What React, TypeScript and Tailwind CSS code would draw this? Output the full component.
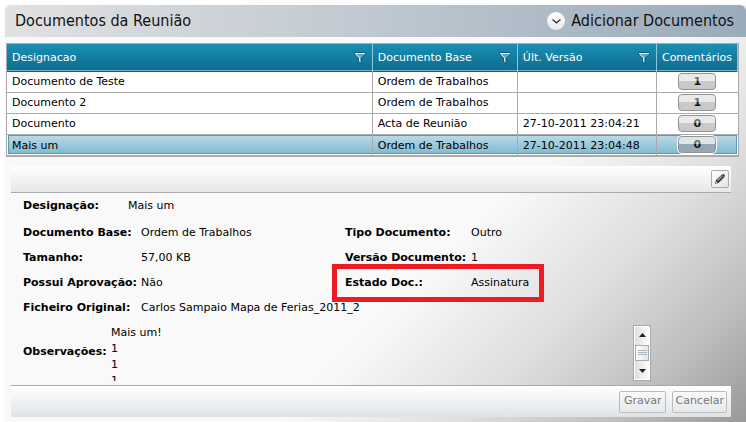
import React, { useState } from 'react'

const documents = [
  { name: 'Documento de Teste', base: 'Ordem de Trabalhos', version: '', comments: 1 },
  { name: 'Documento 2', base: 'Ordem de Trabalhos', version: '', comments: 1 },
  { name: 'Documento', base: 'Acta de Reunião', version: '27-10-2011 23:04:21', comments: 0 },
  { name: 'Mais um', base: 'Ordem de Trabalhos', version: '27-10-2011 23:04:48', comments: 0 },
]

const columns = [
  { title: 'Designacao', filter: true },
  { title: 'Documento Base', filter: true },
  { title: 'Últ. Versão', filter: true },
  { title: 'Comentários', filter: false },
]

function FilterIcon() {
  return (
    <svg width="12" height="13" viewBox="0 0 12 13" aria-hidden="true">
      <path d="M0.5 0.5H11.5V2L7.5 6V12.5L4.5 9.5V6L0.5 2Z" fill="#5fa9c2" stroke="#0b4e68" strokeOpacity="0.8" />
      <path d="M1 1.5H11" stroke="#fff" />
      <path d="M2 2.5L5.5 5.5V9.5" fill="none" stroke="#e3f3f8" />
    </svg>
  )
}

function PencilIcon() {
  return (
    <svg width="12" height="12" viewBox="0 0 12 12" aria-hidden="true">
      <path d="M1 11L2 7L8 1.5L9.5 1L11 2.5L10.5 4L4.5 10Z" fill="#3a3a3a" />
      <path d="M3.5 7.5L8 3.3" stroke="#aaa" strokeWidth="1.2" />
      <path d="M2 9.2L3 10" stroke="#eee" strokeWidth="1.2" />
      <path d="M8 2L10 4" stroke="#888" strokeWidth="0.8" />
    </svg>
  )
}

function CommentButton({ count, selected }: { count: number; selected: boolean }) {
  return (
    <button
      className={`relative block h-[17px] w-[38px] mx-auto overflow-hidden rounded border border-[#949494] text-[11px] leading-[15px] font-bold text-[#111] ${
        selected
          ? 'bg-linear-to-b from-[#c6d5da] from-50% to-[#93aab4] to-50% outline outline-white'
          : 'bg-linear-to-b from-[#dcdcdc] from-50% to-[#c9c9c9] to-50%'
      }`}
    >
      {count}
      <span className="absolute inset-x-0 top-0 h-[7px] bg-white/40" />
    </button>
  )
}

function Field({ label, value, className = '' }: { label: string; value: string; className?: string }) {
  return (
    <>
      <dt className="whitespace-nowrap font-bold">{label}</dt>
      <dd className={`whitespace-nowrap ${className}`}>{value}</dd>
    </>
  )
}

function Scrollbar() {
  return (
    <div className="flex h-14 w-[18px] flex-col items-center justify-between border border-[#aaa] bg-linear-to-r from-[#dcdddf] to-white outline-1 -outline-offset-2 outline-white">
      <button aria-label="Subir" className="flex h-[18px] w-full items-center justify-center">
        <svg width="7" height="4" viewBox="0 0 7 4"><path d="M0 4L3.5 0L7 4Z" fill="#222" /></svg>
      </button>
      <div className="flex h-4 w-[14px] flex-col items-center justify-center gap-px border border-[#aaa] bg-linear-to-r from-white to-[#e2e6e9]">
        <span className="h-px w-[9px] bg-[#a9b5bf]" />
        <span className="h-px w-[9px] bg-[#a9b5bf]" />
        <span className="h-px w-[9px] bg-[#a9b5bf]" />
      </div>
      <button aria-label="Descer" className="flex h-[18px] w-full items-center justify-center">
        <svg width="7" height="4" viewBox="0 0 7 4"><path d="M0 0L3.5 4L7 0Z" fill="#222" /></svg>
      </button>
    </div>
  )
}

function App() {
  const [selected, setSelected] = useState(3)

  return (
    <div className="min-h-screen overflow-hidden bg-[linear-gradient(135deg,#f9f9f9_0%,#f9f9f9_60%,#dedede_76%,#bebebe_89%,#999_100%)] pt-[5px] pl-[5px] font-['DejaVu_Sans',sans-serif] text-[11px] text-black shadow-[inset_5px_5px_4px_#fff]">
      <header className="flex h-8 items-center justify-between rounded-t-md bg-linear-to-r from-[#e1e1e1] via-[#bfc8d1] to-[#9aabba] pr-3 pl-2.5 font-['DejaVu_Sans_Condensed','DejaVu_Sans',sans-serif] text-base text-[#111]">
        <h1>Documentos da Reunião</h1>
        <button className="flex items-center gap-1.5">
          <span className="flex size-[18px] items-center justify-center rounded-full bg-linear-to-b from-white to-[#e9e9e9]">
            <svg width="9" height="5" viewBox="0 0 9 5"><path d="M0.5 0.5L4.5 3.8L8.5 0.5" fill="none" stroke="#333" strokeWidth="1.3" /></svg>
          </span>
          Adicionar Documentos
        </button>
      </header>

      <div className="mt-1.5 mr-[7px] ml-px border border-b-2 border-[#aaa] bg-white">
        <table className="w-full table-fixed border-collapse text-left">
          <colgroup>
            <col className="w-1/2" />
            <col className="w-[145px]" />
            <col className="w-[139px]" />
            <col className="w-[81px]" />
          </colgroup>
          <thead>
            <tr className="h-[27px] border-b border-[#0d6480] bg-linear-to-b from-[#1a8fb4] to-[#0e6d8f] text-white">
              {columns.map((column) => (
                <th key={column.title} className="border-r border-[#8ec6da] pt-0.5 pl-[5px] font-normal shadow-[inset_0_-1px_0_#6fb3cb]">
                  <div className="flex items-center justify-between">
                    {column.title}
                    {column.filter && (
                      <button aria-label={`Filtrar ${column.title}`} className="pr-1.5">
                        <FilterIcon />
                      </button>
                    )}
                  </div>
                </th>
              ))}
            </tr>
          </thead>
          <tbody>
            {documents.map((doc, index) => (
              <tr
                key={doc.name}
                onClick={() => setSelected(index)}
                className={`h-[21px] border-t border-[#aaa] ${
                  selected === index
                    ? 'bg-linear-to-b from-[#bcdbe6] to-[#7ab8d0] shadow-[inset_0_0_0_1px_#fff,inset_0_0_0_2px_#5b9ab3]'
                    : ''
                }`}
              >
                <td className="border-r border-[#aaa] pt-0.5 pl-[5px]">{doc.name}</td>
                <td className="border-r border-[#aaa] pt-0.5 pl-[5px]">{doc.base}</td>
                <td className="border-r border-[#aaa] pt-0.5 pl-[5px]">{doc.version}</td>
                <td>
                  <CommentButton count={doc.comments} selected={selected === index} />
                </td>
              </tr>
            ))}
          </tbody>
        </table>
      </div>

      <section className="mt-[9px] mr-[15px] ml-1.5">
        <div className="flex h-[27px] items-center justify-end border-b border-[#aaa] bg-linear-to-b from-white to-[#e7e7e7] pr-0.5">
          <button aria-label="Editar" className="flex size-[18px] items-center justify-center rounded-xs border border-[#aaa] bg-linear-to-br from-white to-[#e0e5e9]">
            <PencilIcon />
          </button>
        </div>

        <div className="px-3">
          <dl className="flex h-[27px] items-center">
            <Field label="Designação:" value="Mais um" className="ml-[29px]" />
          </dl>
          <div className="flex items-start leading-[25px]">
            <dl className="grid w-[322px] grid-cols-[118px_1fr]">
              <Field label="Documento Base:" value="Ordem de Trabalhos" />
              <Field label="Tamanho:" value="57,00 KB" />
              <Field label="Possui Aprovação:" value="Não" />
              <Field label="Ficheiro Original:" value="Carlos Sampaio Mapa de Ferias_2011_2" />
            </dl>
            <div className="relative w-[212px]">
              <dl className="grid grid-cols-[126px_1fr]">
                <Field label="Tipo Documento:" value="Outro" />
                <Field label="Versão Documento:" value="1" />
                <Field label="Estado Doc.:" value="Assinatura" />
              </dl>
              <div className="pointer-events-none absolute -bottom-[7px] -left-[13px] h-[38px] w-full border-5 border-[#ed1c24]" />
            </div>
          </div>
          <div className="flex h-[65px] items-center">
            <label htmlFor="observacoes" className="w-[88px] font-bold">Observações:</label>
            <textarea
              id="observacoes"
              readOnly
              className="h-14 w-[522px] resize-none overflow-hidden bg-transparent leading-4 outline-none"
              defaultValue={'Mais um!\n1\n1\n1'}
            />
            <Scrollbar />
          </div>
        </div>

        <footer className="flex h-8 items-center justify-end gap-1.5 border-t border-[#aaa] bg-linear-to-b from-white to-[#e0e3e5] pr-1 text-[#777]">
          <button className="h-[22px] rounded-xs border border-[#bbb] px-1">Gravar</button>
          <button className="h-[22px] rounded-xs border border-[#bbb] px-0.5">Cancelar</button>
        </footer>
      </section>
    </div>
  )
}

export default App
